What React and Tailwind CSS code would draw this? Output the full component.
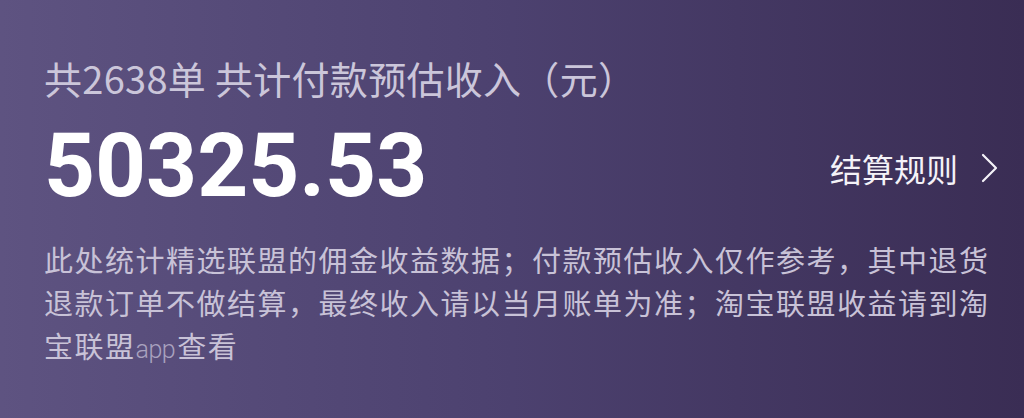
import React from 'react';

const cjk = '"Noto Sans CJK SC", "Noto Sans", sans-serif';

const App = () => {
    return (
        <div
            className="w-[1024px] h-[418px] overflow-hidden bg-gradient-to-r from-[#5e5381] via-[#4c416f] to-[#3a2d54] pl-[44px] pr-[30px] pt-[55px]"
            style={{ fontFamily: cjk }}
        >
            {/* Title */}
            <p className="text-[38px] leading-[46px] text-[#cbc6da] whitespace-nowrap tracking-[0.3px]">
                共2638单 共计付款预估收入（元）
            </p>

            {/* Amount + rule link */}
            <div className="flex items-center justify-between mt-[20px]">
                <span
                    className="text-[89px] leading-[90px] font-bold text-white"
                    style={{ fontFamily: 'Roboto, "Liberation Sans", sans-serif' }}
                >
                    50325.53
                </span>
                <div className="flex items-center gap-[22px] text-[#f4f2f8] mr-[-4px] mt-[4px]">
                    <span className="text-[32px] leading-[40px]">结算规则</span>
                    <svg width="18" height="30" viewBox="0 0 18 30" fill="none">
                        <polyline points="3,2 16,15 3,28" stroke="#f4f2f8" strokeWidth="2.2" strokeLinecap="round" strokeLinejoin="round" />
                    </svg>
                </div>
            </div>

            {/* Notes */}
            <p className="mt-[27px] text-[29px] leading-[43px] tracking-[1.5px] text-[#c8c2d7]">
                此处统计精选联盟的佣金收益数据；付款预估收入仅作参考，其中退货
                <br />
                退款订单不做结算，最终收入请以当月账单为准；淘宝联盟收益请到淘
                <br />
                宝联盟<span className="text-[25px] font-light tracking-[-0.5px] text-[#a9a2bf] mr-[2px]" style={{ fontFamily: 'Roboto, sans-serif' }}>app</span>查看
            </p>
        </div>
    );
};

export default App;
